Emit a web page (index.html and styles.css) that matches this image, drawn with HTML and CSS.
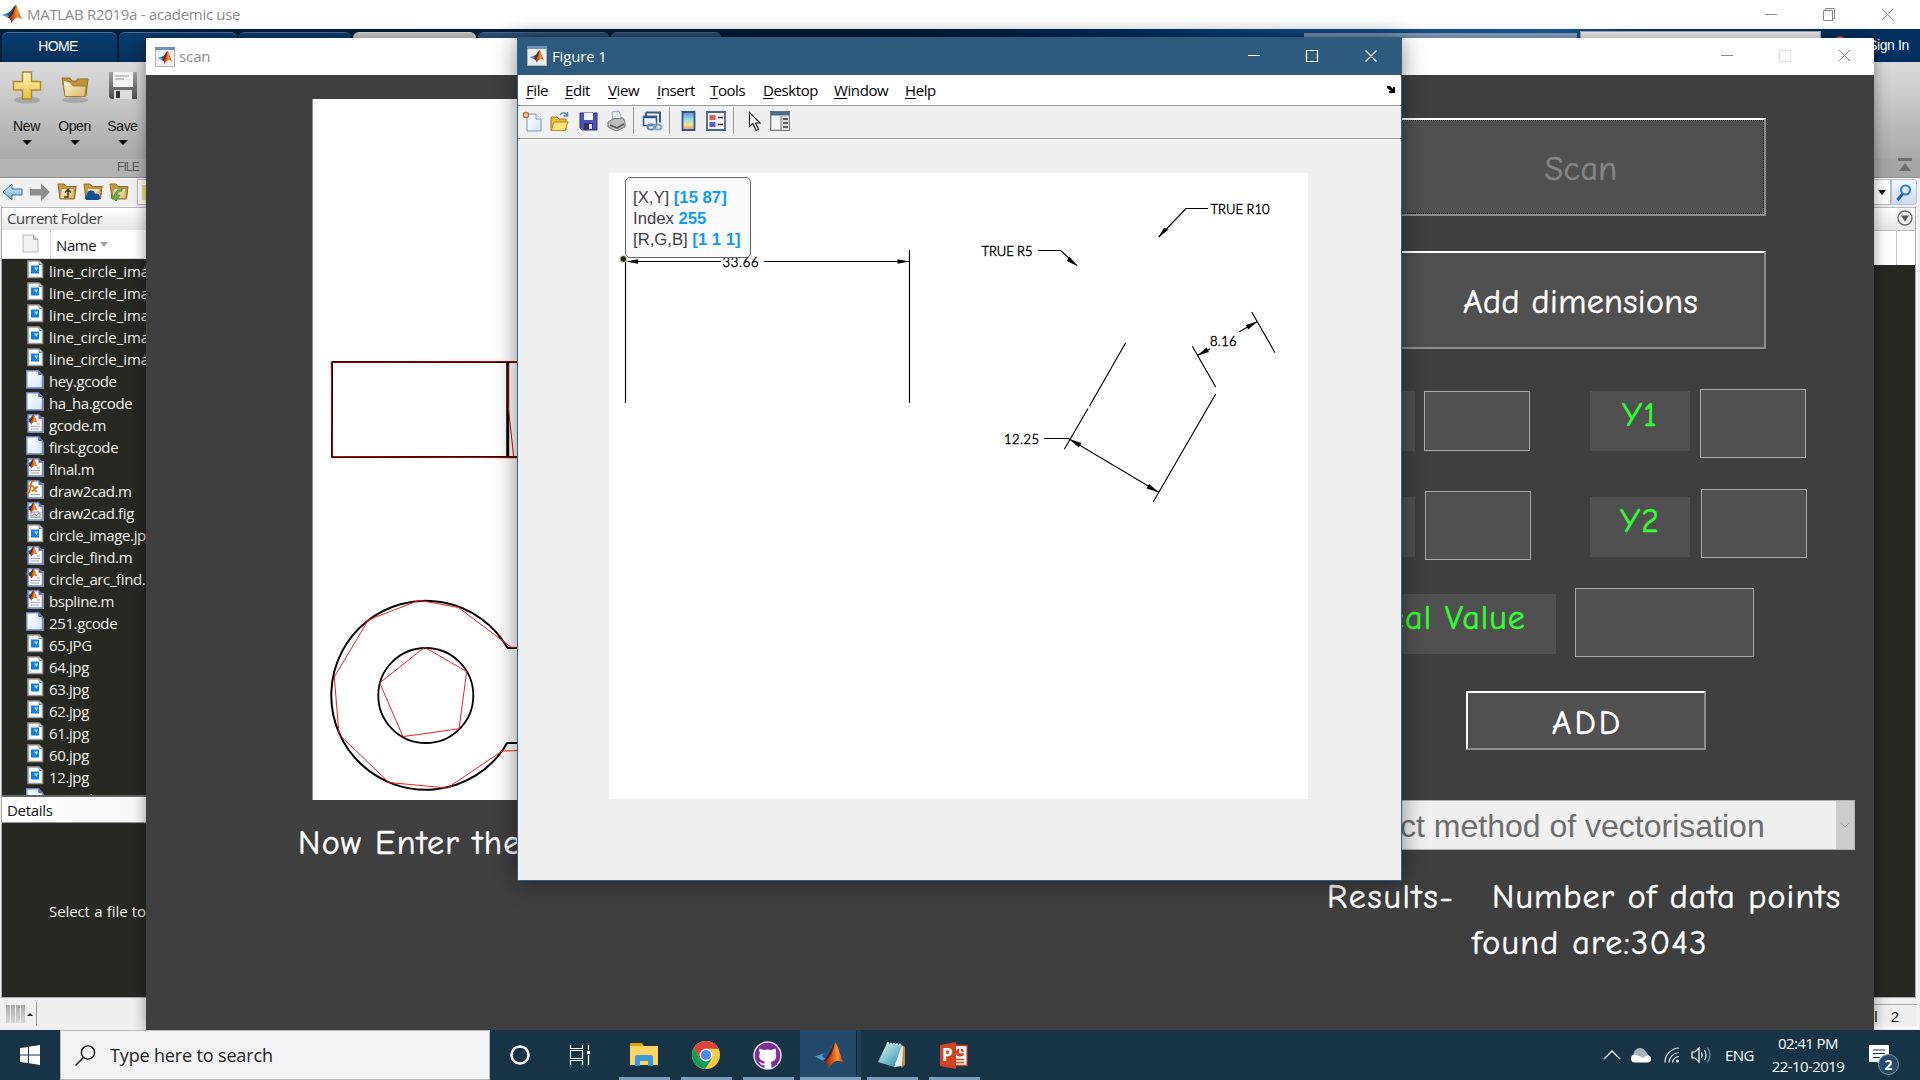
FILE: index.html
```html
<!DOCTYPE html>
<html lang="en">
<head>
<meta charset="utf-8">
<title>MATLAB R2019a - academic use</title>
<link rel="stylesheet" href="styles.css">
</head>
<body>
<svg class="defs" width="0" height="0">
  <defs>
    <linearGradient id="gold" x1="0" y1="0" x2="0" y2="1"><stop offset="0" stop-color="#fdf6c8"/><stop offset="1" stop-color="#e8bd3c"/></linearGradient>
    <linearGradient id="sand" x1="0" y1="0" x2="1" y2="1"><stop offset="0" stop-color="#fffbe8"/><stop offset="1" stop-color="#d9b763"/></linearGradient>
    <linearGradient id="steel" x1="0" y1="0" x2="0" y2="1"><stop offset="0" stop-color="#a0a0a0"/><stop offset="1" stop-color="#4b4b4b"/></linearGradient>
    <linearGradient id="page" x1="0" y1="0" x2="1" y2="1"><stop offset="0" stop-color="#fff"/><stop offset="1" stop-color="#d4e6fb"/></linearGradient>
    <linearGradient id="flame" x1="0" y1="0" x2="1" y2="0"><stop offset="0" stop-color="#5a1a10"/><stop offset=".45" stop-color="#e0561c"/><stop offset=".7" stop-color="#f49a35"/><stop offset="1" stop-color="#b8290c"/></linearGradient>
    <linearGradient id="jet" x1="0" y1="0" x2="0" y2="1"><stop offset="0" stop-color="#5d8fd8"/><stop offset=".4" stop-color="#8edcdc"/><stop offset=".7" stop-color="#f3e98e"/><stop offset="1" stop-color="#e88f7c"/></linearGradient>
    <linearGradient id="sky" x1="0" y1="0" x2="0" y2="1"><stop offset="0" stop-color="#dff1fb"/><stop offset="1" stop-color="#69a9d8"/></linearGradient>
    <linearGradient id="pad" x1="0" y1="0" x2="1" y2="1"><stop offset="0" stop-color="#e9f7fa"/><stop offset=".5" stop-color="#7fc2cf"/><stop offset="1" stop-color="#2a8798"/></linearGradient>
  </defs>
  <symbol id="matlab" viewBox="0 0 29 27">
    <path d="M0 14.5 9.500 11.200 13.500 14.700 8.200 19Z" fill="#4b9bd4"/>
    <path d="M9.500 11.200C14 10 16 2 20 0L17 10 13.500 14.700 10.500 17 6.500 14Z" fill="#23597f"/>
    <path d="M20 0C23 2 25 14 29 21.500 24 17 19 18 13.500 26.500 13 22 11 19 8.200 19 14 15 17 6 20 0Z" fill="url(#flame)"/>
    <path d="M20 0C18.500 8 16 15 10.500 18.800L8.200 19C13.500 14.500 16.500 5 20 0Z" fill="#4d1a1c"/>
  </symbol>
  <symbol id="figwin" viewBox="0 0 20 20">
    <rect x=".5" y=".5" width="19" height="19" fill="#eef0f2" stroke="#a9b1b8"/>
    <rect width="20" height="3" fill="#6f93b5"/>
    <use href="#matlab" x="3" y="4" width="14" height="13"/>
  </symbol>
  <symbol id="f-jpg" viewBox="0 0 18 19">
    <path d="M2 1h11l3.500 3.500V17.500H2Z" fill="#fff" stroke="#9b9b9b" stroke-width="1.500"/>
    <path d="M13 1v3.500h3.500" fill="#ddd" stroke="#888"/>
    <rect x="5" y="5.500" width="8" height="8" fill="#0f82e0"/><path d="M8 7.500h4L10.500 11Z" fill="#bfe3ff"/>
  </symbol>
  <symbol id="f-gen" viewBox="0 0 18 19">
    <path d="M2 2h13v17h3V6z" fill="#8f8f88"/>
    <path d="M.7.7h11.600L16.500 5V18H.7Z" fill="url(#page)" stroke="#6f87c4" stroke-width="1.400"/>
    <path d="M12.300.7V5h4.200Z" fill="#5668a8"/>
  </symbol>
  <symbol id="f-m" viewBox="0 0 18 19">
    <path d="M3 3h15v16H3z" fill="#9d9d98"/>
    <path d="M2 .7h10.500L16.500 4.500V18H2Z" fill="#f6f9ff" stroke="#6f87c4" stroke-width="1.400"/>
    <path d="M12.500.7v4h4Z" fill="#5668a8"/>
    <path d="M5 12.500h9M5 15h8M10.500 10H14" stroke="#a8a8a8"/>
    <use href="#matlab" x="-1" y="0" width="13" height="11"/>
  </symbol>
  <symbol id="f-fx" viewBox="0 0 18 19">
    <path d="M3 3h15v16H3z" fill="#9d9d98"/>
    <path d="M2 .7h10.500L16.500 4.500V18H2Z" fill="#f6f9ff" stroke="#6f87c4" stroke-width="1.400"/>
    <path d="M12.500.7v4h4Z" fill="#5668a8"/><path d="M5 14.500h9" stroke="#a8a8a8"/>
    <path d="M8.500 1.200C5.500 0 5 3 4.500 7S3 13.500.5 12.500M2 6h5.500M6.500 6.500c2.500 0 1.500 5 4.500 5M11.500 6.500 6 11.500" fill="none" stroke="#e0720e" stroke-width="1.700"/>
  </symbol>
  <symbol id="f-fig" viewBox="0 0 18 19">
    <path d="M3 3h15v16H3z" fill="#9d9d98"/>
    <path d="M2 .7h10.500L16.500 4.500V18H2Z" fill="#f6f9ff" stroke="#6f87c4" stroke-width="1.400"/>
    <path d="M12.500.7v4h4Z" fill="#5668a8"/>
    <rect x="5" y="10" width="9" height="5.500" fill="#ddd" stroke="#999"/><path d="m6 14 2.500-2 2 1.500L13 11" fill="none" stroke="#888"/>
    <use href="#matlab" x="-1" y="0" width="13" height="11"/>
  </symbol>
  <symbol id="folder" viewBox="0 0 20 18">
    <path d="M1 2h6l2 2.500h10L17.500 17H3Z" fill="#c79d45" stroke="#8d6c2b"/>
    <path d="M4.500 6.500H17V16.500H3Z" fill="url(#sand)" stroke="#a58239" stroke-width=".8"/>
  </symbol>
</svg>

<main class="desktop">
  <section class="ide">
    <header class="ide-title">
      <svg class="ide-logo"><use href="#matlab"/></svg>
      <span class="ide-name">MATLAB R2019a - academic use</span>
      <svg class="caps" width="140" height="29" fill="none" stroke="#8a8a8a"><path d="M5 14.500h12M63.500 10.500h9v10h-9ZM65.500 10.500v-2h9v10h-2M122 9l11 11M133 9 122 20"/></svg>
    </header>
    <div class="tabs">
      <span class="tab home">HOME</span><span class="tab t2"></span><span class="tab t3"></span><span class="tab t4"></span><span class="tab t5"></span><span class="tab t6"></span>
      <span class="quick"></span><span class="docsearch"></span><span class="bell"></span><span class="signin">Sign In</span>
    </div>
    <div class="ribbon">
      <div class="tool"><svg width="30" height="34" viewBox="0 0 30 34"><ellipse cx="15" cy="29" rx="13" ry="3.500" fill="#888" opacity=".5"/><path d="M10.500 1h9v9.500h9v8.500h-9V28h-9V19h-9v-8.500h9Z" fill="url(#gold)" stroke="#b28a2c" stroke-width="1.500"/></svg><span>New</span><i></i></div>
      <div class="tool"><svg width="30" height="34" viewBox="0 0 30 34"><ellipse cx="15" cy="29" rx="13" ry="3" fill="#888" opacity=".5"/><path d="M2 7h8l2 3h5V8h11l-2 17H5Z" fill="#bf9440" stroke="#94702b"/><path d="m3 9 7 2 3 4h13l-1 10.500H5Z" fill="url(#sand)" stroke="#a37e33"/></svg><span>Open</span><i></i></div>
      <div class="tool"><svg width="30" height="34" viewBox="0 0 30 34"><path d="M1 1h28v27H3l-2-2Z" fill="url(#steel)"/><path d="M5 1h20v15H5Z" fill="#f4f4f4"/><path d="M7 5h14M7 8h9" stroke="#999"/><path d="M6 19h18v9H6Z" fill="#ddd"/><path d="M8 20h4v7H8Z" fill="#333"/></svg><span>Save</span><i></i></div>
      <svg class="collapse" width="16" height="16"><path d="M1 1h14v3H1ZM8 6l6 8H2Z" fill="#6e6e6e"/></svg>
    </div>
    <div class="ribbon-foot">FILE</div>
    <div class="address">
      <svg width="22" height="20" viewBox="0 0 22 20"><path d="M1 10 10 2v5h10v6H10v5Z" fill="url(#sky)" stroke="#3f7096"/></svg>
      <svg width="22" height="20" viewBox="0 0 22 20"><path d="M21 10 12 1.500V7H1v6.500h11v5.500Z" fill="#8f8f8f"/></svg>
      <svg class="gap" width="21" height="20"><use href="#folder" width="20" height="18"/><path d="M7 15h4V8M8 10.500 11 7.500l3 3" fill="none" stroke="#4a3a1a" stroke-width="1.600"/></svg>
      <svg width="21" height="20"><use href="#folder" width="20" height="18"/><path d="M3 18a3 3 0 0 1 1-5 4 4 0 0 1 8-1 3 3 0 0 1 3 6Z" fill="#0d4f94"/></svg>
      <svg width="21" height="20"><use href="#folder" width="20" height="18"/><path d="M13 7C7 8 5 11 5.500 14H2l5 5 4-6H8c0-2 2-3.500 5-4Z" fill="#69b14c" stroke="#3e8029" stroke-width=".6"/></svg>
      <span class="path"><b></b></span>
      <span class="drop"></span>
      <span class="find"><svg width="16" height="18" fill="none"><circle cx="9.500" cy="6" r="4.500" stroke="#2f83d0" stroke-width="2.200"/><path d="m6.500 10-5 6" stroke="#1d5fae" stroke-width="3"/></svg></span>
    </div>
    <div class="panels">
      <aside class="files">
        <h2>Current Folder</h2>
        <div class="colhead"><span class="c1"><svg width="17" height="19" viewBox="0 0 17 19"><path d="M1 1h10.500L16 5.500V18H1Z" fill="#f2f2f2" stroke="#b7b7b7"/><path d="M11.500 1v4.500H16" fill="#ccc" stroke="#aaa"/></svg></span><span class="c2">Name</span><i></i></div>
        <ul class="list">
          <li class="loose"><svg><use href="#f-jpg"/></svg>line_circle_image1.jpg</li>
          <li class="loose"><svg><use href="#f-jpg"/></svg>line_circle_image2.jpg</li>
          <li class="loose"><svg><use href="#f-jpg"/></svg>line_circle_image3.jpg</li>
          <li class="loose"><svg><use href="#f-jpg"/></svg>line_circle_image4.jpg</li>
          <li class="loose"><svg><use href="#f-jpg"/></svg>line_circle_image5.jpg</li>
          <li><svg><use href="#f-gen"/></svg>hey.gcode</li>
          <li><svg><use href="#f-gen"/></svg>ha_ha.gcode</li>
          <li><svg><use href="#f-m"/></svg>gcode.m</li>
          <li><svg><use href="#f-gen"/></svg>first.gcode</li>
          <li><svg><use href="#f-m"/></svg>final.m</li>
          <li><svg><use href="#f-fx"/></svg>draw2cad.m</li>
          <li><svg><use href="#f-fig"/></svg>draw2cad.fig</li>
          <li><svg><use href="#f-jpg"/></svg>circle_image.jpg</li>
          <li><svg><use href="#f-m"/></svg>circle_find.m</li>
          <li><svg><use href="#f-m"/></svg>circle_arc_find.m</li>
          <li><svg><use href="#f-m"/></svg>bspline.m</li>
          <li><svg><use href="#f-gen"/></svg>251.gcode</li>
          <li><svg><use href="#f-jpg"/></svg>65.JPG</li>
          <li><svg><use href="#f-jpg"/></svg>64.jpg</li>
          <li><svg><use href="#f-jpg"/></svg>63.jpg</li>
          <li><svg><use href="#f-jpg"/></svg>62.jpg</li>
          <li><svg><use href="#f-jpg"/></svg>61.jpg</li>
          <li><svg><use href="#f-jpg"/></svg>60.jpg</li>
          <li><svg><use href="#f-jpg"/></svg>12.jpg</li>
          <li><svg><use href="#f-gen"/></svg>5.gcode</li>
        </ul>
        <h3>Details</h3>
        <div class="details">Select a file to view details</div>
      </aside>
      <aside class="editor">
        <div class="ed-head"><svg width="18" height="18"><circle cx="9" cy="9" r="7" fill="#eee" stroke="#666" stroke-width="1.300"/><path d="M5 6.500h8L9 12.500Z" fill="#555"/></svg></div>
        <div class="ed-bar"><span></span></div>
        <div class="ed-body"></div>
      </aside>
    </div>
    <footer class="status">
      <span class="busy"><i></i><i></i><i></i><i></i></span><span class="up"></span>
      <span class="colno"><span>Col</span><span>2</span></span>
    </footer>
  </section>

  <section class="scan">
    <header class="scan-title">
      <svg class="win-ico"><use href="#figwin"/></svg><span>scan</span>
      <svg class="caps" width="140" height="37" fill="none" stroke="#8a8a8a"><path d="M6 17.500h12M124 12l11 11M135 12 124 23"/><path stroke="#e2e2e2" d="M64.500 12.500h11v11h-11Z"/></svg>
    </header>
    <div class="scan-body">
      <div class="source">
        <svg class="drawing" width="699" height="701" viewBox="313 99 699 701" fill="none">
          <path d="M331.500 362H540M331.500 457H540M332 362v95" stroke="#000" stroke-width="2"/>
          <path d="M507.700 362v95" stroke="#000" stroke-width="3"/>
          <path d="M331.300 362.300 540 361.500M331.300 362l1 94.500L480 457.500 540 458M508.200 365V406l5.500 51" stroke="#e00000" stroke-width="1"/>
          <path d="M540 648H508L507 647A94.500 94.500 0 1 0 503.500 749L507 743H540" stroke="#000" stroke-width="2"/>
          <circle cx="425.800" cy="695.500" r="47.500" stroke="#000" stroke-width="1.800"/>
          <path d="M540 647.300H511.300L458.300 607.400 419 600.300 368.300 620 334.300 677 339 734.500 389 782.500 447.300 788 502.300 751 540 750M424.700 647.300l42 24.300-7.700 57.200-56 7.800-23.300-53.800Z" stroke="#f02020" stroke-width="1"/>
        </svg>
        <p class="prompt">Now Enter the points</p>
      </div>
      <div class="form">
        <div class="btn scan-btn"><span>Scan</span></div>
        <div class="btn dims-btn">Add dimensions</div>
        <div class="row r1"><span class="lbl">X1</span><span class="box short"></span><span class="lbl y">Y1</span><span class="box"></span></div>
        <div class="row r2"><span class="lbl">X2</span><span class="box low"></span><span class="lbl y">Y2</span><span class="box"></span></div>
        <div class="row r3"><span class="lbl wide">Real Value</span><span class="box wide"></span></div>
        <div class="btn add-btn">ADD</div>
        <div class="select"><span>Select method of vectorisation</span><b><svg width="12" height="8" fill="none" stroke="#9a9a9a"><path d="m1.500 1.500 4.500 4.500 4.500-4.500"/></svg></b></div>
        <p class="results"><span class="ln1"><span class="res">Results-</span><span>Number of data points</span></span><span class="ln2">found are:3043</span></p>
      </div>
    </div>
  </section>

  <section class="figure">
    <header class="fig-title">
      <svg class="win-ico"><use href="#figwin"/></svg><span>Figure 1</span>
      <svg class="caps" width="140" height="37" fill="none" stroke="#fff" stroke-width="1.200"><path d="M4 17.500h12M62.500 12.500h11v11h-11ZM121.500 12.500l11 11M132.500 12.500l-11 11"/></svg>
    </header>
    <nav class="menu"><span class="w39"><u>F</u>ile</span><span class="w43"><u>E</u>dit</span><span class="w49"><u>V</u>iew</span><span class="w53"><u>I</u>nsert</span><span class="w53"><u>T</u>ools</span><span class="w71"><u>D</u>esktop</span><span class="w71"><u>W</u>indow</span><span><u>H</u>elp</span>
      <svg class="dock" width="10" height="8"><path d="M1 1h3l3 3V2h2v6H3V6h2L1 3Z" fill="#000"/></svg></nav>
    <div class="toolbar">
      <svg width="20" height="20"><path d="M5 3h9l5 5v12H5Z" fill="url(#page)" stroke="#7892b5"/><path d="M14 3v5h5" fill="#fff" stroke="#7892b5"/><circle cx="4" cy="4" r="2.500" fill="#fbe2b8" stroke="#d9653a" stroke-width="1.500"/></svg>
      <svg class="m7" width="21" height="20"><path d="M2 6h6l2 2h7v11H2Z" fill="#e8bc3c" stroke="#a07a1c"/><path d="M5 11h14l-3 8.500H2Z" fill="#fbe27c" stroke="#b38a24"/><path d="M11 4c2-3 5-3 7 0M18.500 1v4h-4" fill="none" stroke="#5f86b4" stroke-width="1.500"/></svg>
      <svg class="m9" width="19" height="20"><path d="M1 2h17v17H3l-2-2Z" fill="#4d50b8" stroke="#30337f"/><path d="M5 2h9v7H5Z" fill="#eef0fb"/><path d="M5 12h9v7H5Z" fill="#32355e"/><path d="M10 13h3v5h-3Z" fill="#dfe2f2"/></svg>
      <svg class="m9" width="19" height="20"><path d="m5 1 7-1 3 9-9 2Z" fill="#e8f1fb" stroke="#8ea5c4"/><path d="m1 11 5-3 10-1 2 4v5l-9 4-8-4Z" fill="#bdbdbd" stroke="#777"/><path d="m3 14 7 3 7-4" fill="none" stroke="#555" stroke-width="1.500"/></svg>
      <i></i>
      <svg class="m7" width="21" height="20"><path d="M4 1.500h14v10M4 1.500v4" fill="none" stroke="#37598a" stroke-width="2"/><path d="M1.500 5.500h13v9h-13Z" fill="#f2f6fc" stroke="#37598a" stroke-width="1.500"/><path d="M1.500 6h13" stroke="#37598a" stroke-width="2.500"/><ellipse cx="9.500" cy="16" rx="4" ry="2.500" fill="none" stroke="#6684ab" stroke-width="2"/><ellipse cx="15.500" cy="16" rx="4" ry="2.500" fill="none" stroke="#8aa3c4" stroke-width="2"/></svg>
      <i class="s2"></i>
      <svg class="m10" width="16" height="20"><path d="M1.500 1h12v18h-12Z" fill="url(#jet)" stroke="#3a5385" stroke-width="1.800"/></svg>
      <svg class="m9" width="21" height="20"><path d="M1 1h18v18H1Z" fill="#f6f8fc" stroke="#4c658f" stroke-width="1.800"/><path d="M3.500 4h6v5h-6Z" fill="#e05a5a"/><path d="M3.500 11h6v5h-6Z" fill="#5a5ae0"/><path d="M12 6.500h5M12 13.500h5" stroke="#333" stroke-width="1.300"/></svg>
      <i class="s2"></i>
      <svg class="m14" width="13" height="20"><path d="M1.500 1.500v14l3.500-3 3 7 2.500-1.200-3-6.300h4.500Z" fill="#fff" stroke="#222" stroke-width="1.200"/></svg>
      <svg class="m9" width="20" height="20"><path d="M.7.7h18.600v18.600H.7Z" fill="#f4f4f4" stroke="#6f7680" stroke-width="1.300"/><path d="M.5.500h19v4H.5Z" fill="#4a6c8c"/><path d="M11 5h8v14h-8Z" fill="#ddd"/><path d="M11 5v14" stroke="#777"/><path d="M13 8h5M13 12h5M13 16h5" stroke="#333" stroke-width="1.500"/></svg>
    </div>
    <div class="fig-canvas">
      <svg class="axes" width="699" height="626" viewBox="609 173 699 626">
        <g fill="none" stroke="#000" stroke-width="1.150">
          <path d="M625.500 261v142M909.500 250v153M628 261.500h93M764 261.500h145"/>
          <path d="M1208 208.500H1186L1158.700 237M1038 250.500h22.700l16.300 15.200"/>
          <path d="M1044 438.500h24.500l90.200 53.800M1125.700 342.700 1089.500 406M1088 408.500 1064.300 449.300M1215.700 394l-62.400 107.700"/>
          <path d="m1192.300 346.300 23.400 40.700M1251.700 312l23.300 40.700M1239.300 331.700l17.700-10M1210.300 348.700l-12.600 6.600"/>
        </g>
        <g stroke="none" fill="#000">
          <path d="m626 261.500 12-2.300v4.600ZM909.500 261.500l-12-2.300v4.600ZM1158.500 237.300l5.500-9.500 4.500 2ZM1077.300 266l-10.500-5 2.700-4.500ZM1069 439l12.500 4-2.700 4.500ZM1159 492.500l-12.500-4 2.700-4.500ZM1197.500 355.500l9-8 2.500 4.500ZM1257.300 321.500l-9 8-2.500-4.500Z"/>
        </g>
        <g class="dim">
          <text x="722.500" y="267" textLength="36">33.66</text>
          <text x="1210.500" y="214" textLength="59">TRUE R10</text>
          <text x="981.500" y="256" textLength="51">TRUE R5</text>
          <text x="1004" y="444" textLength="35">12.25</text>
          <text x="1210" y="346" textLength="26.500">8.16</text>
        </g>
        <circle cx="623.300" cy="259" r="3.300" fill="#222" stroke="#d8d8a8" stroke-width=".8"/>
      </svg>
      <div class="datatip"><p>[X,Y] <b>[15 87]</b></p><p>Index <b>255</b></p><p>[R,G,B] <b>[1 1 1]</b></p></div>
    </div>
  </section>

  <footer class="taskbar">
    <span class="start"><svg width="20" height="20" fill="#fff"><path d="M0 3 8 2v7.500H0ZM9 1.800 20 0v9.500H9ZM0 10.500h8V18L0 17ZM9 10.500h11V20L9 18.200Z"/></svg></span>
    <span class="search"><svg width="21" height="21" fill="none" stroke="#111" stroke-width="1.400"><circle cx="13" cy="7.500" r="6.600"/><path d="m8.500 12.500-8 8"/></svg><span>Type here to search</span></span>
    <span class="app cortana"><svg width="20" height="20"><circle cx="10" cy="10" r="8.500" fill="none" stroke="#fff" stroke-width="2.500"/></svg></span>
    <span class="app view"><svg width="21" height="20" fill="none" stroke="#fff" stroke-width="1.200"><path d="M.5 0v3.500h12V0M.5 5.500h12v8H.5ZM.5 20v-4.500h12V20M18.500 0v5M18.500 10v10"/><path d="M17 6h3v3h-3Z" fill="#fff" stroke="none"/></svg></span>
    <span class="app run a1"><svg width="28" height="24"><path d="M0 0h12l2 3H0Z" fill="#e0a100"/><path d="M0 3h28v19H0Z" fill="#fcd462"/><path d="M5 23V14q0-2 2-2h14q2 0 2 2v9h-5v-5h-8v5Z" fill="#3c97dc"/></svg></span>
    <span class="app run a2"><svg width="28" height="28" viewBox="-14 -14 28 28"><circle r="14" fill="#fccb42"/><path d="M-12.100-7-6 3.500 0 6 6 3.500-1 14A14 14 0 0 1-12.100-7Z" fill="#0f9d58"/><path d="M-12.100-7A14 14 0 0 1 12.500-6.300H0L-6.300 3Z" fill="#db4437"/><circle r="6.300" fill="#fff"/><circle r="5" fill="#4a86f0"/></svg></span>
    <span class="app run a3"><svg width="29" height="29" viewBox="0 0 29 29"><circle cx="14.500" cy="14.500" r="13.500" fill="#7a3096" stroke="#e9dff0" stroke-width="1.500"/><path d="M6.500 7.500 10.500 9q4-1 8 0l4-1.500q1 3 0 4.500c2 5-.5 8-5 9 1 1 1 2 1 6.500h-7V24c-4 1-4-2-6.500-3.500 3 0 3.500 3 6.500 1.700 0-.7 0-1 .5-1.500-5-1-7-4-5-8.700-1-1.500-1-3-.5-4.500Z" fill="#fff"/></svg></span>
    <span class="app run a4"><svg width="29" height="27"><use href="#matlab"/></svg></span>
    <span class="app run a5"><svg width="28" height="26"><path d="m24 3 3 2v18l-4 3Z" fill="#c28a32"/><path d="m19 5 6-1-1 20-8 1Z" fill="#e6eef0"/><path d="m9 1 15 2-8 22L0 20Z" fill="url(#pad)"/><path d="m9 1 15 2" stroke="#ddd" stroke-width="2" stroke-dasharray="2 1"/></svg></span>
    <span class="app run a6"><svg width="28" height="27"><path d="M13 3.500h14v20H13Z" fill="#fff" stroke="#d04423" stroke-width="1.300"/><circle cx="20" cy="10.500" r="4" fill="#d04423"/><path d="M20 6v4.500H24" fill="none" stroke="#fff" stroke-width="1.500"/><path d="M16 17.500h8M16 20.500h8" stroke="#d04423" stroke-width="1.500"/><path d="m0 3 16-3v27L0 24Z" fill="#d04423"/></svg><em>P</em></span>
    <span class="tray">
      <svg width="18" height="12" fill="none" stroke="#fff" stroke-width="1.400"><path d="m1 10 8-8 8 8"/></svg>
      <svg class="cloud" width="21" height="15"><path d="M3 9A6 6 0 0 1 15 4L19 9Z" fill="#a7b4bd"/><path d="M4 14.500a4 4 0 0 1 0-8L12 9.500l4.500-2a3.500 3.500 0 0 1 0 7Z" fill="#fff"/></svg>
      <svg class="wifi" width="16" height="16" fill="none" stroke="#e4eaee" stroke-width="1.200"><path d="M1 15.500A14.500 14.500 0 0 1 15 1M5 15.500A10.500 10.500 0 0 1 15 5.500M8.500 15.500A6.500 6.500 0 0 1 15 9.500"/><circle cx="13.500" cy="14" r="1.500" fill="#fff" stroke="none"/></svg>
      <svg class="vol" width="21" height="18" fill="none" stroke="#fff" stroke-width="1.200"><path d="M1 6h3l4-4v14l-4-4H1ZM10.500 6.500q1.500 2.500 0 5M13.500 4q3 5 0 10"/><path d="M16.500 1.500q5 7.500 0 15" stroke="#7e929e"/></svg>
      <span class="lang">ENG</span>
      <span class="clock"><span>02:41 PM</span><span class="date">22-10-2019</span></span>
      <span class="note"><svg width="20" height="20"><path d="M0 0h20v17h-8v3l-4-3H0Z" fill="#fff"/><path d="M4 5h12M4 8.500h12M4 12.500h7" stroke="#163446" stroke-width="1.200"/></svg><b>2</b></span>
    </span>
  </footer>
</main>
</body>
</html>
```
FILE: styles.css
```css
* { box-sizing: border-box; }
body { margin: 0; font-family: "Segoe UI", "Open Sans", "Noto Sans", sans-serif; font-size: 15px; overflow: hidden; }
p, h2, h3, ul { margin: 0; padding: 0; font-weight: normal; }
svg { display: block; flex: none; overflow: visible; }
.defs { position: absolute; }
.desktop { position: relative; width: 1920px; height: 1080px; overflow: hidden; background: #163446; }

/* main MATLAB window */
.ide { position: absolute; left: 0; top: 0; width: 1920px; height: 1030px; display: flex; flex-direction: column; background: #f0f0f0; overflow: hidden; }
.ide-title { height: 29px; background: #fff; display: flex; align-items: center; padding: 0 0 1px 2px; color: #8c8c8c; }
.ide-logo { width: 20px; height: 20px; }
.ide-name { margin-left: 5px; letter-spacing: -.3px; }
.caps { margin-left: auto; }
.ide-title .caps { margin-right: 20px; }
.tabs { height: 33px; flex: none; display: flex; align-items: flex-end; padding-left: 2px; background: linear-gradient(90deg, #00203a 0, #001f3c 900px, #002f63 1100px, #0f4c88 1280px, #1a5796 1560px, #00305f 1660px); }
.tab { height: 30px; border-radius: 6px 6px 0 0; border-top: 1px solid #4a7099; background: linear-gradient(#0a3c70, #063058); margin-right: 2px; flex: none; }
.home { width: 115px; color: #fff; font: 14px/27px "Liberation Sans", Arial, sans-serif; letter-spacing: -.6px; text-align: center; padding-right: 3px; }
.t2 { width: 118px; } .t3 { width: 112px; } .t4 { width: 123px; background: #ccc; border-color: #ddd; }
.t5 { width: 131px; background: #33587f; } .t6 { width: 110px; background: #33587f; }
.quick { width: 273px; height: 29px; margin-left: 581px; background: #8aa5c6; flex: none; }
.docsearch { width: 241px; height: 31px; margin-left: 3px; background: #f0f0f0; border: 1px solid #aaa; flex: none; }
.bell { width: 12px; height: 26px; margin-left: 13px; border-radius: 6px; background: #d8553a; flex: none; }
.signin { margin-left: 22px; color: #fff; font: 14px/33px "Liberation Sans", Arial, sans-serif; letter-spacing: -.4px; }
.ribbon { height: 97px; flex: none; display: flex; padding: 9px 0 0 3px; background: linear-gradient(#dcdcdc, #a9a9a9); }
.tool { width: 48px; display: flex; flex-direction: column; align-items: center; font: 14px/20px "Liberation Sans", Arial, sans-serif; }
.tool span { margin: 11px 1px 0 0; color: #111; letter-spacing: -.4px; }
.tool i { margin-top: 4px; border: 5.500px solid transparent; border-top: 5.500px solid #000; border-bottom: 0; }
.collapse { margin: 86px 7px 0 auto; z-index: 1; }
.ribbon-foot { height: 19px; flex: none; border-bottom: 1px solid #888; font: 12px/17px "Liberation Sans", Arial, sans-serif; letter-spacing: -.9px; color: #555; padding-left: 117px; background: linear-gradient(90deg, #b4b4b4, #a6a6a6); }
.address { height: 29px; flex: none; display: flex; align-items: center; padding: 0 0 2px 2px; gap: 5px; border-top: 1px solid #fff; }
.address .gap { margin-left: 1px; }
.path { margin-left: 2px; width: 100px; height: 26px; border: 1px solid #bbb; background: #fff; padding: 5px 4px; }
.path b { display: block; width: 12px; height: 15px; background: #f6d982; }
.drop { margin-left: auto; width: 28px; height: 26px; background: #fff; border: 1px solid #bbb; padding: 10px 0 0 14px; display: block; margin-right: -5px; }
.drop::after { content: ""; display: block; width: 0; border: 4.500px solid transparent; border-top: 5.500px solid #111; border-bottom: 0; }
.find { width: 26px; height: 26px; margin-right: 3px; border: 1px solid #b5bfd6; background: linear-gradient(#f3f6fc, #cfdaf0); padding: 4px; border-radius: 0 3px 3px 0; }
.panels { flex: 1; min-height: 0; display: flex; justify-content: space-between; }
.files { width: 300px; margin-left: 2px; display: flex; flex-direction: column; box-shadow: -1px 0 #aaa; }
.files h2 { height: 23px; font-size: 15px; line-height: 20px; color: #444; padding-left: 5px; letter-spacing: -.5px; background: linear-gradient(#fff, #e6e6e6); border-top: 1px solid #bbb; }
.colhead { height: 29px; background: #fff; display: flex; align-items: center; border-bottom: 1px solid #ddd; }
.c1 { width: 49px; height: 29px; border-right: 1px solid #ddd; padding: 4px 0 0 20px; }
.c2 { margin: 1px 4px 0 5px; letter-spacing: -.4px; color: #111; }
.colhead i { border: 4.500px solid transparent; border-top: 5px solid #a7a392; border-bottom: 0; }
.list { list-style: none; height: 536px; padding-top: 1px; background: #272822; overflow: hidden; }
.list li { height: 22px; display: flex; align-items: center; gap: 5px; padding-left: 24px; line-height: 22px; color: #f0f0ea; letter-spacing: -.38px; white-space: nowrap; }
.list .loose { letter-spacing: -.05px; }
.list svg { width: 18px; height: 19px; margin-top: -3px; }
.files h3 { height: 28px; border-top: 2px solid #666; border-bottom: 1px solid #999; box-shadow: inset 0 1px #fff; background: linear-gradient(90deg, #fff, #eee); padding-left: 5px; font-size: 15px; line-height: 26px; letter-spacing: -.3px; color: #111; }
.details { flex: 1; background: #272822; color: #f0f0ea; text-align: left; padding: 78px 0 0 47px; letter-spacing: -.1px; border-bottom: 1px solid #aaa; word-spacing: .6px; }
.editor { width: 60px; margin-right: 4px; border-right: 1px solid #aaa; box-shadow: 1px 0 #fff; display: flex; flex-direction: column; }
.ed-head { height: 24px; background: linear-gradient(#fff, #e6e6e6); border: 1px solid #bbb; border-width: 1px 0; display: flex; justify-content: flex-end; padding: 1px 1px 0; }
.ed-bar { height: 34px; background: #fff; display: flex; justify-content: flex-end; }
.ed-bar span { width: 19px; border-left: 1px solid #ccc; }
.ed-body { flex: 1; background: #272822; border-bottom: 1px solid #aaa; }
.status { height: 32px; flex: none; display: flex; align-items: center; padding: 0 2px 0 6px; }
.busy { display: flex; gap: 1px; }
.busy i { width: 4px; height: 18px; background: linear-gradient(#aaa, #d8d8d8); }
.up { height: 24px; width: 12px; border-right: 1px solid #999; padding: 11px 0 0 2px; }
.up::after { content: ""; display: block; width: 0; border: 3px solid transparent; border-bottom: 3px solid #222; border-top: 0; }
.colno { margin: 6px 0 2px auto; width: 80px; height: 24px; border: 1px solid #fff; border-top-color: #aaa; font: 15px/24px "Liberation Sans", Arial, sans-serif; display: flex; gap: 13px; justify-content: flex-end; padding-right: 18px; color: #111; }

/* scan window */
.scan { position: absolute; left: 146px; top: 38px; width: 1728px; height: 992px; background: #3f3f3f; box-shadow: 0 0 14px rgba(0,0,0,.4); display: flex; flex-direction: column; }
.scan-title { height: 37px; background: #fff; display: flex; align-items: center; padding-left: 9px; color: #8c8c8c; }
.win-ico { width: 20px; height: 20px; margin-right: 4px; }
.scan-title span { letter-spacing: -.1px; margin-top: -1px; }
.scan-title .caps { margin-right: 19px; }
.scan-body { flex: 1; display: flex; justify-content: space-between; padding-left: 167px; font-family: "Comic Sans MS", "Comic Neue", "Noto Sans", sans-serif; font-size: 34px; letter-spacing: 1.100px; color: #fff; -webkit-text-stroke: .5px; }
.source { padding-top: 24px; }
.drawing { background: #fff; overflow: hidden; box-shadow: -1px 0 #888; }
.prompt { margin: 20px 0 0 -15px; line-height: 46px; letter-spacing: 1.300px; }
.form { width: 559px; padding-top: 43px; }
.btn { background: #505050; border: 2px solid; border-color: #fff #8e8e8e #8e8e8e #fff; display: flex; align-items: center; justify-content: center; letter-spacing: .4px; padding-top: 3px; }
.scan-btn { margin-left: 80px; width: 371px; height: 98px; color: #868686; padding-top: 0; }
.scan-btn span { flex: 1; align-self: stretch; display: grid; place-items: center; padding: 3px 0 0 1px; outline: 1px dotted #000; outline-offset: -1px; }
.dims-btn { margin: 35px 0 0 80px; width: 371px; height: 98px; }
.row { display: flex; align-items: flex-start; }
.r1 { margin-top: 40px; } .r2 { margin-top: 31px; } .r3 { margin-top: 28px; padding-left: 21px; }
.lbl { width: 100px; height: 60px; background: #505050; color: #32ff32; text-align: center; line-height: 49px; margin-right: 9px; }
.lbl.y { margin-right: 10px; }
.r1 .lbl { margin-top: 2px; } .r2 .lbl { margin-top: 8px; margin-right: 10px; } .r2 .lbl.y { margin-right: 11px; }
.r3 .lbl.wide { width: 220px; margin: 6px 19px 0 0; }
.box { width: 106px; height: 69px; border: 1px solid #a9a9b2; background: #505050; }
.box.short { height: 60px; margin: 2px 60px 0 0; }
.box.low { margin: 2px 59px 0 0; }
.box.wide { width: 179px; }
.add-btn { margin: 34px 0 0 151px; width: 240px; height: 59px; letter-spacing: 3px; padding: 4px 0 0 3px; }
.select { margin: 50px 0 0 17px; width: 523px; height: 50px; background: #f0f0f0; border: 1px solid #b0b0b0; display: flex; justify-content: space-between; font: 32px/50px "Liberation Sans", Arial, sans-serif; letter-spacing: 0; -webkit-text-stroke: 0; color: #6d6d6d; padding-left: 3px; }
.select b { width: 18px; background: #ccc; display: grid; place-items: center; }
.results { margin: 24px 0 0 12px; line-height: 46px; white-space: nowrap; }
.results > span { display: block; }
.results .ln1 { display: flex; }
.res { width: 165px; letter-spacing: 1.800px; }
.ln2 { padding-left: 145px; letter-spacing: 1.300px; }

/* figure window */
.figure { position: absolute; left: 517px; top: 37px; width: 885px; height: 844px; border: 1px solid #2d5f8b; border-top: 0; background: #f0f0f0; box-shadow: 0 2px 22px rgba(0,0,0,.45); display: flex; flex-direction: column; }
.fig-title { height: 38px; background: #2e5a7d; display: flex; align-items: center; padding-left: 9px; color: #fff; }
.fig-title span { letter-spacing: -.15px; margin: -1px 0 0 1px; }
.fig-title .caps { margin-right: 17px; }
.menu { height: 31px; background: #fff; border-bottom: 1px solid #999; display: flex; align-items: center; padding: 0 5px 0 8px; color: #000; letter-spacing: -.4px; }
.menu u { text-underline-offset: 2px; }
.w39 { width: 39px; } .w43 { width: 43px; } .w49 { width: 49px; } .w53 { width: 53px; } .w71 { width: 71px; }
.dock { margin: 0 0 2px auto; }
.toolbar { height: 33px; border-bottom: 1px solid #999; box-shadow: 0 1px #fff; display: flex; align-items: center; padding: 0 0 3px 4px; }
.toolbar i { width: 1px; height: 27px; background: #999; margin-left: 7px; margin-right: 1px; }
.toolbar i.s2 { margin-left: 6px; }
.m7 { margin-left: 7px; } .m9 { margin-left: 9px; } .m10 { margin-left: 10px; } .m14 { margin-left: 13px; }
.fig-canvas { position: relative; padding: 34px 0 0 91px; }
.axes { background: #fff; overflow: hidden; }
.dim { font: 300 13px Lato, "Liberation Sans", sans-serif; fill: #000; stroke: #000; stroke-width: .45px; }
.datatip { position: absolute; left: 107px; top: 38px; width: 126px; height: 81px; border: 1px solid #666; border-radius: 5px; background: #fbfbff; padding: 9px 0 0 7px; font: 16.700px/21px "Liberation Sans", Arial, sans-serif; color: #404040; white-space: nowrap; }
.datatip b { color: #0d9bff; }

/* taskbar */
.taskbar { position: absolute; left: 0; top: 1030px; width: 1920px; height: 50px; background: #163446; display: flex; color: #fff; }
.start { width: 60px; display: grid; place-items: center; }
.search { width: 430px; background: #f2f3f5; border: 1px solid #bbb; display: flex; align-items: center; padding-left: 14px; gap: 14px; font-size: 18px; color: #222; letter-spacing: -.15px; }
.app { width: 51px; height: 50px; display: grid; place-items: center; }
.run { border-bottom: 3px solid #7d9dbd; padding: 3px 2px 0 0; margin-right: 11px; }
.cortana { width: 60px; } .view { width: 62px; margin-right: 7px; padding-right: 2px; }
.a1 { justify-content: start; padding-left: 11px; }
.a3 { margin-right: 6px; }
.a4 { width: 61px; background: linear-gradient(90deg, #24496b 56px, #11293a 56px, #11293a 57px, #1d3f58 57px); margin-right: 6px; }
.a6 { position: relative; }
.a6 em { position: absolute; left: 13px; top: 12px; font: bold 17px/26px "Open Sans", sans-serif; }
.tray { margin-left: auto; display: flex; align-items: center; padding-right: 5px; width: 317px; }
.cloud { margin-left: 10px; } .wifi { margin-left: 12px; } .vol { margin-left: 11px; }
.lang { margin-left: 13px; width: 28px; letter-spacing: -.6px; }
.clock { margin-left: 16px; width: 78px; display: flex; flex-direction: column; text-align: center; line-height: 23px; letter-spacing: -.6px; white-space: nowrap; }
.note { position: relative; margin-left: 22px; height: 20px; }
.note b { position: absolute; left: 9px; top: 9px; width: 21px; height: 21px; border-radius: 50%; border: 1px solid #7f98ac; background: #27496a; font-size: 14px; line-height: 19px; text-align: center; }
```
